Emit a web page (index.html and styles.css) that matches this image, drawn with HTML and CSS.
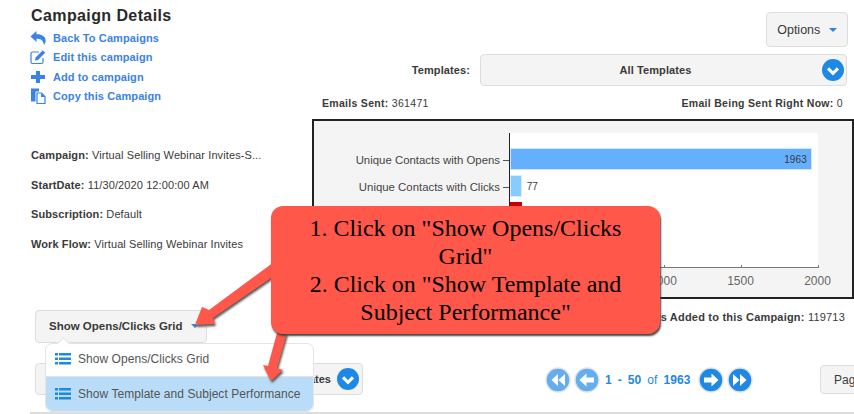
FILE: index.html
```html
<!DOCTYPE html>
<html lang="en">
<head>
    <meta charset="UTF-8">
    <title>Campaign Details</title>
    <link rel="stylesheet" href="styles.css">
</head>
<body>

    <div class="top">
        <section class="details">
            <h2>Campaign Details</h2>
            <ul class="links">
                <li>
                    <svg viewBox="0 0 16 16"><path d="M6.5 1 0.5 6.500l6 5.500V8.800c4 0 6.500 1 7.500 6.200 1.500-2 2-4 1.500-5.500C15 6.300 11.500 4.300 6.500 4.300z"/></svg>
                    <a href="#">Back To Campaigns</a>
                </li>
                <li>
                    <svg viewBox="0 0 16 16"><path d="M13 9v4a1.500 1.500 0 0 1-1.500 1.500H2.500A1.500 1.500 0 0 1 1 13V4.500A1.500 1.500 0 0 1 2.500 3H9" fill="none" stroke="#3b82e6" stroke-width="1.200"/><path d="M5 11.500l.6-3L12.800 1.300l2.400 2.400L8 10.900z"/></svg>
                    <a href="#">Edit this campaign</a>
                </li>
                <li>
                    <svg viewBox="0 0 16 16"><path d="M6 2h4v4h5v4h-5v4H6v-4H1V6h5z"/></svg>
                    <a href="#">Add to campaign</a>
                </li>
                <li>
                    <svg viewBox="0 0 16 16"><path d="M1 0.500h8v3H5.500v10H1z"/><path d="M7 5h4.500L15 8.500v7H7z" fill="#fff" stroke="#3b82e6" stroke-width="1.200"/><path d="M11 5v4h4z"/></svg>
                    <a href="#">Copy this Campaign</a>
                </li>
            </ul>

            <dl class="info">
                <div><dt>Campaign:</dt> <dd>Virtual Selling Webinar Invites-S...</dd></div>
                <div><dt>StartDate:</dt> <dd>11/30/2020 12:00:00 AM</dd></div>
                <div><dt>Subscription:</dt> <dd>Default</dd></div>
                <div><dt>Work Flow:</dt> <dd>Virtual Selling Webinar Invites</dd></div>
            </dl>
        </section>

        <section class="summary">
            <div class="options-row">
                <button class="btn btn-options">Options <span class="caret"></span></button>
            </div>
            <div class="templates-row">
                <label>Templates:</label>
                <div class="select">
                    <span>All Templates</span>
                    <svg class="round-icon" viewBox="0 0 20 20"><circle cx="10" cy="10" r="10"/><path d="M5.500 8.500 10 13l4.500-4.500" fill="none" stroke="#fff" stroke-width="2.800"/></svg>
                </div>
            </div>
            <div class="stats-row">
                <span><b>Emails Sent:</b> 361471</span>
                <span><b>Email Being Sent Right Now:</b> 0</span>
            </div>

            <div class="chart">
                <div class="chart-labels">
                    <span>Unique Contacts with Opens</span>
                    <span>Unique Contacts with Clicks</span>
                </div>
                <div class="chart-main">
                    <div class="plot">
                        <div class="bar-row"><div class="bar bar-opens" style="width: 98%">1963</div></div>
                        <div class="bar-row"><div class="bar bar-clicks" style="width: 3.800%"></div><span class="bar-value">77</span></div>
                        <div class="bar-row"><div class="bar bar-red" style="width: 4%"></div></div>
                    </div>
                    <div class="axis">
                        <span>1000</span><span>1500</span><span>2000</span>
                    </div>
                </div>
            </div>

            <div class="added-row"><b>Contacts Added to this Campaign:</b> 119713</div>
        </section>
    </div>

    <div class="toolbar">
        <button class="btn btn-grid">Show Opens/Clicks Grid <span class="caret"></span></button>
    </div>

    <div class="pager-row">
        <button class="btn btn-all-templates">All Templates
            <svg class="round-icon" viewBox="0 0 20 20"><circle cx="10" cy="10" r="10"/><path d="M5.500 8.500 10 13l4.500-4.500" fill="none" stroke="#fff" stroke-width="2.800"/></svg>
        </button>
        <div class="pager">
            <svg class="page-icon faded" viewBox="0 0 26 26"><circle cx="13" cy="13" r="12"/><path d="M13 7v12l-6.500-6zM20 7v12l-6.500-6z" fill="#fff"/></svg>
            <svg class="page-icon faded" viewBox="0 0 26 26"><circle cx="13" cy="13" r="12"/><path d="M12.500 6.500v4H20v5h-7.500v4L5.500 13z" fill="#fff"/></svg>
            <span class="page-text"><b>1</b> <b>-</b> <b>50</b> of <b>1963</b></span>
            <svg class="page-icon" viewBox="0 0 26 26"><circle cx="13" cy="13" r="12"/><path d="M13.500 6.500v4H6v5h7.500v4l7-6.500z" fill="#fff"/></svg>
            <svg class="page-icon" viewBox="0 0 26 26"><circle cx="13" cy="13" r="12"/><path d="M13 7v12l6.500-6zM6 7v12l6.500-6z" fill="#fff"/></svg>
        </div>
        <button class="btn btn-page">Page</button>
    </div>

    <div class="table-head"></div>

    <!-- dropdown open over the page -->
    <ul class="menu">
        <li>
            <svg class="list-icon" viewBox="0 0 16 14"><path d="M0 1h3v2.500H0zM4 1h12v2.500H4zM0 5.500h3V8H0zM4 5.500h12V8H4zM0 10h3v2.500H0zM4 10h12v2.500H4z"/></svg>
            Show Opens/Clicks Grid
        </li>
        <li class="active">
            <svg class="list-icon" viewBox="0 0 16 14"><path d="M0 1h3v2.500H0zM4 1h12v2.500H4zM0 5.500h3V8H0zM4 5.500h12V8H4zM0 10h3v2.500H0zM4 10h12v2.500H4z"/></svg>
            Show Template and Subject Performance
        </li>
    </ul>

    <!-- annotation on top of the screenshot -->
    <svg class="arrows" viewBox="0 0 854 414">
        <path d="M274 262 209 310 202 307 195 325 215 324 213 318 274 276z"/>
        <path d="M277 333 287 333 277 368 283 370 271 381 263 365 268 366z"/>
    </svg>
    <div class="callout">
        1. Click on "Show Opens/Clicks Grid"<br>
        2. Click on "Show Template and Subject Performance"
    </div>

</body>
</html>
```

FILE: styles.css
```css
body {
    font-family: "Liberation Sans", Arial, sans-serif;
    font-size: 11px;
    color: #3a3a3a;
    margin: 0;
    width: 854px;
    height: 414px;
    overflow: hidden;
    position: relative;
    background-color: #fff;
    letter-spacing: 0.1px;
}

.top {
    display: flex;
}

.details {
    width: 312px;
    padding: 7px 0 0 31px;
    box-sizing: border-box;
}

.details h2 {
    margin: 0;
    font-size: 16px;
    line-height: 18px;
    color: #2a2a2a;
    letter-spacing: 0.4px;
}

.links {
    list-style: none;
    margin: 3px 0 0;
    padding: 0;
}

.links li {
    display: flex;
    align-items: center;
    height: 19.5px;
}

.links svg {
    width: 16px;
    height: 16px;
    fill: #3b82e6;
    margin: 0 7px 0 -1px;
}

.links a {
    color: #3b82e6;
    font-weight: bold;
    text-decoration: none;
}

.info {
    margin: 43px 0 0;
}

.info div {
    height: 29.6px;
    white-space: nowrap;
}

.info dt,
.info dd {
    display: inline;
    margin: 0;
}

.info dt {
    font-weight: bold;
}

.summary {
    width: 542px;
    position: relative;
}

.options-row {
    display: flex;
    justify-content: flex-end;
    padding: 12px 6px 0 0;
}

.btn {
    background-color: #f4f4f4;
    border: 1px solid #ddd;
    border-radius: 4px;
    font-family: inherit;
    color: #3a3a3a;
    padding: 0;
}

.btn-options {
    width: 82px;
    height: 35px;
    font-size: 12.5px;
}

.caret {
    display: inline-block;
    width: 0;
    height: 0;
    margin-left: 5px;
    vertical-align: middle;
    border-left: 4px solid transparent;
    border-right: 4px solid transparent;
    border-top: 4px solid #2b86e0;
}

.templates-row {
    display: flex;
    align-items: center;
    margin-top: 7px;
    padding-right: 7px;
}

.templates-row label {
    width: 158px;
    text-align: right;
    font-weight: bold;
    margin-right: 10px;
}

.select {
    flex: 1;
    height: 32px;
    box-sizing: border-box;
    background-color: #f4f4f4;
    border: 1px solid #ddd;
    border-radius: 4px;
    display: flex;
    align-items: center;
    justify-content: center;
    padding-right: 16px;
    position: relative;
    font-weight: bold;
}

.round-icon {
    width: 22px;
    height: 22px;
    fill: #1e88e5;
    flex-shrink: 0;
}

.select .round-icon {
    position: absolute;
    right: 2px;
    top: 4px;
}

.stats-row {
    display: flex;
    justify-content: space-between;
    padding: 11px 11px 0 10px;
    font-size: 10.5px;
    line-height: 12px;
    letter-spacing: 0.3px;
}

.chart {
    display: flex;
    margin-top: 10px;
    height: 180px;
    box-sizing: border-box;
    border: 2px solid #222;
    background-color: #f4f4f4;
}

.chart-labels {
    width: 195px;
    padding-top: 26px;
    text-align: right;
    color: #444;
    font-size: 11.4px;
    letter-spacing: 0;
}

.chart-labels span {
    display: block;
    height: 27px;
    line-height: 26px;
    padding-right: 9px;
    position: relative;
}

/* axis tick next to each label */
.chart-labels span::after {
    content: "";
    position: absolute;
    right: 0;
    top: 13px;
    width: 6px;
    height: 1px;
    background-color: #555;
}

.chart-main {
    width: 309px;
    padding-top: 12px;
}

.plot {
    height: 135px;
    box-sizing: border-box;
    background-color: #fff;
    border-left: 1px solid #222;
    border-bottom: 1px solid #777;
    padding-top: 15px;
    overflow: hidden;
}

.bar-row {
    display: flex;
    align-items: center;
    height: 22px;
    margin-bottom: 5px;
}

.bar {
    height: 22px;
    text-align: right;
    line-height: 22px;
    font-size: 10px;
    box-sizing: border-box;
}

.bar-opens {
    background-color: #64b0ff;
    border: 1px solid #cfe6ff;
    padding-right: 4px;
}

.bar-clicks {
    background-color: #87cbff;
    border: 1px solid #d8eeff;
}

.bar-red {
    background-color: #c40000;
}

.bar-value {
    font-size: 10px;
    margin-left: 5px;
}

.axis {
    display: flex;
    margin-left: 116px;
    padding-top: 6px;
    font-size: 12px;
    color: #666;
    letter-spacing: 0;
}

.axis span {
    flex: none;
    width: 77px;
    text-align: center;
    position: relative;
}

.axis span::before {
    content: "";
    position: absolute;
    left: 50%;
    top: -9px;
    width: 1px;
    height: 3px;
    background-color: #777;
}

.added-row {
    text-align: right;
    padding: 12px 9px 0 0;
    line-height: 13px;
    letter-spacing: 0.2px;
}

.toolbar {
    position: absolute;
    left: 35px;
    top: 310px;
}

.btn-grid {
    width: 172px;
    height: 33px;
    font-size: 11.5px;
    font-weight: bold;
    text-align: left;
    padding: 0 0 2px 13px;
}

.pager-row {
    position: absolute;
    left: 35px;
    top: 363px;
    width: 819px;
    display: flex;
    align-items: flex-start;
}

.btn-all-templates {
    width: 328px;
    height: 32px;
    display: flex;
    align-items: center;
    justify-content: flex-end;
    gap: 6px;
    padding-right: 3px;
    font-weight: bold;
    font-size: 11px;
    box-sizing: border-box;
}

.pager {
    display: flex;
    align-items: center;
    margin-left: 182px;
    margin-top: 4px;
    color: #1e88e5;
    font-size: 12px;
    gap: 3px;
}

.page-icon {
    width: 26px;
    height: 26px;
    fill: #1e88e5;
    stroke: #e4e4e4;
    stroke-width: 1.5;
}

.page-icon path {
    stroke: none;
}

.page-icon.faded {
    fill: #64adef;
}

.page-text {
    margin: 0 4px 0 2px;
    word-spacing: 2.5px;
}

.btn-page {
    position: absolute;
    left: 785px;
    top: 2px;
    width: 60px;
    height: 29px;
    font-size: 12px;
    text-align: left;
    padding-left: 13px;
}

.table-head {
    position: absolute;
    left: 30px;
    right: 0;
    top: 412px;
    height: 2px;
    background-color: #ddd;
}

.menu {
    position: absolute;
    left: 45px;
    top: 343px;
    width: 269px;
    margin: 0;
    padding: 0;
    list-style: none;
    background-color: #fff;
    border: 1px solid #e4e4e4;
    border-radius: 7px;
    box-sizing: border-box;
    color: #555;
    font-size: 12px;
    letter-spacing: 0.05px;
}

/* little notch pointing at the button */
.menu::before {
    content: "";
    position: absolute;
    left: 13px;
    top: -5px;
    width: 8px;
    height: 8px;
    background-color: #fff;
    border-left: 1px solid #e4e4e4;
    border-top: 1px solid #e4e4e4;
    transform: rotate(45deg);
}

.menu li {
    display: flex;
    align-items: center;
    height: 30px;
    padding: 0 0 2px 9px;
    gap: 7px;
    position: relative;
}

.menu li.active {
    height: 34px;
    padding-bottom: 0;
    background-color: #b9dcf8;
    border-top: 1px solid #e4e4e4;
    border-radius: 0 0 7px 7px;
}

.list-icon {
    width: 16px;
    height: 14px;
    fill: #1e88e5;
}

.arrows {
    position: absolute;
    left: 0;
    top: 0;
    width: 854px;
    height: 414px;
    fill: #ff574a;
    filter: drop-shadow(1px 2px 1px #555);
}

.callout {
    position: absolute;
    left: 271px;
    top: 206px;
    width: 389px;
    height: 128px;
    box-sizing: border-box;
    padding: 8px 30px 0;
    background-color: #ff574a;
    border-radius: 12px;
    box-shadow: 1px 2px 2px #444;
    color: #000;
    font-family: "Liberation Serif", "Times New Roman", serif;
    font-size: 24px;
    line-height: 28px;
    text-align: center;
    letter-spacing: 0;
}
```
